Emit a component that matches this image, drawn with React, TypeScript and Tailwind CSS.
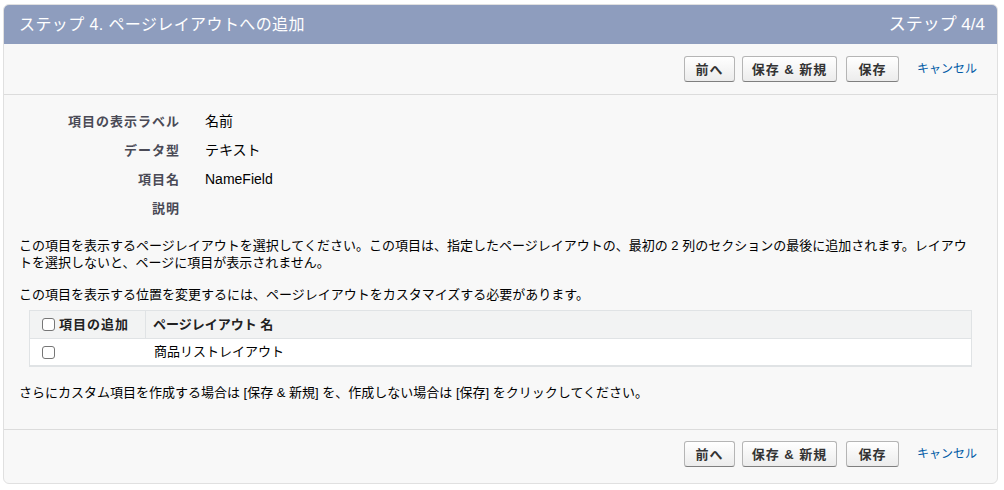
import React from 'react';

const font = { fontFamily: '"Liberation Sans", "Noto Sans CJK JP", sans-serif' };

function Btn({ children, w }: { children: React.ReactNode; w: string }) {
  return (
    <button
      className={`${w} h-[26px] rounded-[3px] border border-[#b5b5b5] border-b-[#7f7f7f] bg-gradient-to-b from-white to-[#ececec] text-[13px] font-bold text-[#333] leading-none tracking-[1px]`}
    >
      {children}
    </button>
  );
}

function ButtonRow() {
  return (
    <div className="flex items-center justify-end pr-[20px]">
      <Btn w="w-[51px]">前へ</Btn>
      <div className="w-[7px]" />
      <Btn w="w-[95px]">保存 &amp; 新規</Btn>
      <div className="w-[9px]" />
      <Btn w="w-[53px]">保存</Btn>
      <a className="ml-[18px] text-[12px] text-[#015ba7]">キャンセル</a>
    </div>
  );
}

const fields: [string, string][] = [
  ['項目の表示ラベル', '名前'],
  ['データ型', 'テキスト'],
  ['項目名', 'NameField'],
  ['説明', ''],
];

export default function App() {
  return (
    <div className="w-[1004px] h-[490px] bg-white pt-[4px] px-[3px]" style={font}>
      <div className="w-[995px] h-[480px] rounded-[6px] border border-[#e0e0e0] bg-[#f8f8f8] overflow-hidden flex flex-col">
        {/* Header */}
        <div className="h-[39px] shrink-0 bg-[#8e9dbe] flex items-center justify-between pl-[15px] pr-[12px] text-white text-[16px]">
          <span className="tracking-[0.4px]">ステップ 4. ページレイアウトへの追加</span>
          <span className="text-[17px]">ステップ 4/4</span>
        </div>

        {/* Top buttons */}
        <div className="h-[51px] shrink-0 border-b border-[#dcdcdc] pt-[12px]">
          <ButtonRow />
        </div>

        {/* Body */}
        <div className="flex-1 pt-[12px] px-[15px] text-[13px] text-black">
          <div className="flex flex-col">
            {fields.map(([label, value]) => (
              <div key={label} className="h-[29px] flex items-center">
                <div className="w-[161px] text-right font-bold text-[#4a4a56] tracking-[1px]">{label}</div>
                <div className="ml-[25px] text-[14px]">{value}</div>
              </div>
            ))}
          </div>

          <p className="mt-[14px] leading-[17px]">
            この項目を表示するページレイアウトを選択してください。この項目は、指定したページレイアウトの、最初の 2 列のセクションの最後に追加されます。レイアウ
            <br />
            トを選択しないと、ページに項目が表示されません。
          </p>
          <p className="mt-[15px] leading-[17px]">
            この項目を表示する位置を変更するには、ページレイアウトをカスタマイズする必要があります。
          </p>

          <div className="mt-[7px] mx-[10px] border border-[#e0e3e5] border-b-2">
            <div className="h-[28px] bg-[#f2f3f3] flex items-center font-bold text-[#222] border-b border-[#e0e3e5]">
              <div className="w-[116px] h-full flex items-center pl-[12px] gap-[4px] border-r border-[#e0e3e5] tracking-[1px]">
                <span className="w-[13px] h-[13px] rounded-[3px] border border-[#767676] bg-white" />
                項目の追加
              </div>
              <div className="pl-[7px]">ページレイアウト 名</div>
            </div>
            <div className="h-[26px] bg-white flex items-center">
              <div className="w-[116px] pl-[12px]">
                <span className="block w-[13px] h-[13px] rounded-[3px] border border-[#767676] bg-white" />
              </div>
              <div className="pl-[8px]">商品リストレイアウト</div>
            </div>
          </div>

          <p className="mt-[16px]">
            さらにカスタム項目を作成する場合は [保存 &amp; 新規] を、作成しない場合は [保存] をクリックしてください。
          </p>
        </div>

        {/* Bottom buttons */}
        <div className="h-[54px] shrink-0 border-t border-[#dcdcdc] pt-[11px]">
          <ButtonRow />
        </div>
      </div>
    </div>
  );
}
